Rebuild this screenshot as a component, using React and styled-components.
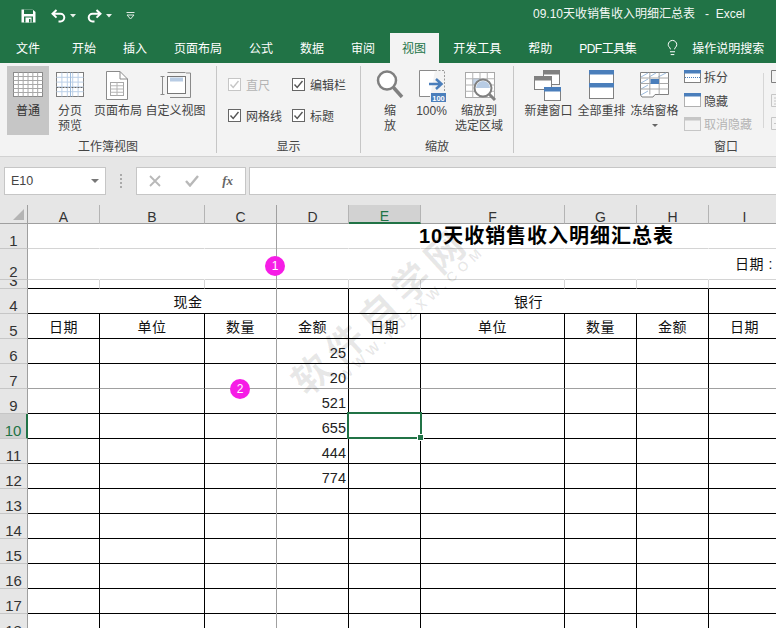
import React from 'react';
import styled, { createGlobalStyle } from 'styled-components';
import { Lightbulb } from 'lucide-react';

const FONT = '"Liberation Sans", "Noto Sans CJK SC", sans-serif';
const GREEN = '#217346';
const BLUE = '#4a7ebb';

const Global = createGlobalStyle`
  html, body { margin: 0; padding: 0; background: #e6e6e6; }
  body { font-family: ${FONT}; }
`;

const Page = styled.div`
  width: 776px; height: 628px; overflow: hidden; display: flex; flex-direction: column;
  font-family: ${FONT}; font-size: 12px; color: #444;
`;
const TitleBar = styled.div`
  height: 33px; flex: none; background: ${GREEN}; color: #fff; display: flex; align-items: flex-start; justify-content: space-between;
  padding: 7px 31px 0 21px; box-sizing: border-box;
`;
const Qat = styled.div`display: flex; align-items: center; height: 17px;`;
const QatSlot = styled.span`display: flex; align-items: center; margin-right: ${p => p.$mr || 0}px;`;
const DocTitle = styled.div`line-height: 14px; white-space: pre; color: #fff; opacity: .95;`;
const TabBar = styled.div`
  height: 30px; flex: none; background: ${GREEN}; display: flex; align-items: stretch; padding-left: 2.5px;
`;
const Tab = styled.div`
  padding: 0 ${p => p.$active ? 12.5 : 13.5}px 2px; display: flex; align-items: center; color: ${p => p.$active ? GREEN : '#fff'}; white-space: nowrap;
  background: ${p => p.$active ? '#f3f3f3' : 'transparent'};
  margin: 0 ${p => p.$active ? 1 : (p.$mr || 0)}px 0 ${p => p.$active ? 1 : 0}px;
  letter-spacing: ${p => p.$tight ? -.5 : 0}px; box-sizing: border-box;
`;
const Search = styled.div`
  display: flex; align-items: center; color: #fff; gap: 11.5px; margin-left: 14px; padding-bottom: 1px; white-space: nowrap;
`;
const Ribbon = styled.div`
  height: 94px; flex: none; background: #f3f3f3; border-bottom: 1px solid #d2d2d2; box-sizing: border-box; padding: 3px 0 3px; display: flex; overflow: hidden;
`;
const Group = styled.section`
  width: ${p => p.$w}px; flex: none; box-sizing: border-box; border-right: ${p => p.$open ? 'none' : '1px solid #c6c6c6'};
  display: flex; flex-direction: column;
`;
const GroupBody = styled.div`flex: 1; display: flex; padding-left: ${p => p.$pl || 0}px; min-height: 0;`;
const GroupLabel = styled.div`height: 16px; line-height: 20px; text-align: center; color: #444; flex: none;`;
const LargeBtn = styled.div`
  width: ${p => p.$w}px; height: 69px; flex: none; display: flex; flex-direction: column; align-items: center;
  background: ${p => p.$active ? '#c6c6c6' : 'transparent'}; color: #444;
`;
const BtnIcon = styled.svg`width: ${p => p.$w}px; height: 38px; flex: none; display: block;`;
const BtnText = styled.div`line-height: 15px; text-align: center; white-space: nowrap; color: ${p => p.$dark ? '#333' : '#444'};`;
const Caret = styled.div`
  width: 0; height: 0; border-left: 3px solid transparent; border-right: 3px solid transparent; border-top: 3px solid #666; margin-top: 5px;
`;
const CheckGrid = styled.div`
  display: grid; grid-template-columns: 64px auto; grid-auto-rows: 31px; padding: 3px 0 0 11px; align-items: center; justify-content: start; margin-top: 0; height: 62px;
`;
const CheckItem = styled.label`display: flex; align-items: center; gap: 5px; color: ${p => p.$off ? '#b4b4b4' : '#444'}; white-space: nowrap;`;
const CheckBox = styled.span`
  width: 13px; height: 13px; box-sizing: border-box; border: 1px solid ${p => p.$off ? '#c6c6c6' : '#666'}; background: #fff; display: flex; align-items: center; justify-content: center;
`;
const SmallCol = styled.div`display: flex; flex-direction: column; margin: -1px 0 0 ${p => p.$ml}px; flex: none; width: ${p => p.$w}px;`;
const SmallRow = styled.div`height: 23.5px; display: flex; align-items: center; gap: 3px; color: ${p => p.$off ? '#b4b4b4' : '#444'}; white-space: nowrap;`;
const InnerSep = styled.div`width: 1px; height: 55px; margin: 7px 0 0 8px; background: #d6d6d6; flex: none;`;

const FormulaBar = styled.div`
  height: 48px; flex: none; background: #e6e6e6; display: flex; align-items: flex-start; padding: 10px 0 0 4px; box-sizing: border-box;
`;
const FBox = styled.div`
  height: 28px; box-sizing: border-box; background: #fff; border: 1px solid #c6c6c6; display: flex; align-items: center; flex: none;
`;
const NameBox = styled(FBox)`width: 102px; padding: 0 6px; justify-content: space-between; color: #444; font-size: 12.5px;`;
const DropTri = styled.span`width: 0; height: 0; border-left: 4px solid transparent; border-right: 4px solid transparent; border-top: 4px solid #777;`;
const Dots = styled.div`width: 30px; flex: none; height: 28px; display: flex; flex-direction: column; align-items: center; justify-content: center; gap: 2px;`;
const Dot = styled.span`width: 2px; height: 2px; background: #aaa;`;
const FnBox = styled(FBox)`width: 110px; position: relative; justify-content: space-between; padding: 0 12px 0 12px;`;
const Fx = styled.span`font-family: "Liberation Serif", serif; font-style: italic; font-weight: 700; font-size: 13px; color: #666;`;
const Input = styled(FBox)`flex: 1; margin: 0 -4px 0 3px;`;

const Sheet = styled.div`flex: 1; min-height: 0; overflow: hidden; position: relative; background: #fff;`;
const SheetGrid = styled.div`
  display: grid; grid-template-columns: 28px 72px 105px 72px 72px 72px 144px 72px 72px 72px; width: 781px;
`;
const Corner = styled.div`
  height: 19px; background: #e6e6e6; box-sizing: border-box; border-right: 1px solid #9f9f9f; border-bottom: 1px solid #9f9f9f; position: relative; overflow: hidden;
  &::after { content: ''; position: absolute; right: 3px; bottom: 3px; width: 0; height: 0; border-left: 11px solid transparent; border-bottom: 11px solid #b4b4b4; }
`;
const ColHead = styled.div`
  height: 19px; box-sizing: border-box; display: flex; justify-content: center; align-items: flex-end; line-height: 12px; font-size: 14px;
  background: ${p => p.$sel ? '#d2d2d2' : '#e6e6e6'}; color: ${p => p.$sel ? GREEN : '#333'};
  border-right: 1px solid #b4b4b4; border-bottom: ${p => p.$sel ? `2px solid ${GREEN}` : '1px solid #9f9f9f'};
`;
const RowHead = styled.div`
  height: ${p => p.$h}px; box-sizing: border-box; overflow: hidden; display: flex; justify-content: center; align-items: flex-end; line-height: 15px; font-size: 15px; padding-bottom: 0;
  background: ${p => p.$sel ? '#d2d2d2' : '#e6e6e6'}; color: ${p => p.$sel ? GREEN : '#333'};
  border-right: ${p => p.$sel ? `2px solid ${GREEN}` : '1px solid #9f9f9f'}; border-bottom: 1px solid #c6c6c6;
`;
const Cell = styled.div`
  grid-column: span ${p => p.$span || 1}; height: ${p => p.$h}px; box-sizing: border-box; position: relative; display: flex; align-items: center; white-space: nowrap;
  justify-content: ${p => p.$align || 'center'}; padding: ${p => p.$num ? 3 : 0}px ${p => p.$align === 'flex-end' ? 2 : 0}px 0 0;
  border-right: 1px solid ${p => p.$right || 'transparent'}; border-bottom: 1px solid ${p => p.$bottom};
  color: ${p => p.$num ? '#222' : '#111'}; font-size: ${p => p.$num ? 14.5 : 14}px; letter-spacing: ${p => p.$num ? 0 : .5}px;
`;
const BigTitle = styled.span`font-size: 20px; font-weight: 700; color: #000; letter-spacing: .97px; position: absolute; left: -2px; top: 0; line-height: 25px;`;
const DateLabel = styled.span`position: absolute; left: 26px; top: 6px; line-height: 18px;`;
const SelBox = styled.div`
  position: absolute; left: -2px; top: -2px; width: 75px; height: 27px; box-sizing: border-box; border: 2px solid ${GREEN}; z-index: 3;
`;
const Handle = styled.div`
  position: absolute; right: -3px; bottom: -3px; width: 5px; height: 5px; background: ${GREEN}; outline: 1px solid #fff;
`;
const FreezeV = styled.div`position: absolute; left: 276px; top: 0; bottom: 0; width: 1px; background: #a0a0a0; z-index: 2;`;
const Mark = styled.div`
  position: absolute; left: ${p => p.$x}px; top: ${p => p.$y}px; width: 20px; height: 20px; border-radius: 50%; background: #f61de6; color: #fff; z-index: 5;
  display: flex; align-items: center; justify-content: center; font-size: 12px;
`;
const Wm = styled.div`
  position: absolute; left: ${p => p.$x}px; top: ${p => p.$y}px; transform: translate(-50%, -50%) rotate(-42.5deg); white-space: nowrap; z-index: 1; pointer-events: none;
  color: rgba(0,0,0,.09); font-weight: 700; font-size: ${p => p.$size}px; letter-spacing: ${p => p.$ls}px;
`;

const grid = (x, y, w, h, cols, rows, stroke) => {
  const out = [];
  for (let i = 1; i < cols; i++) { const px = x + (w * i) / cols; out.push(<line key={'v' + i} x1={px} x2={px} y1={y} y2={y + h} stroke={stroke} />); }
  for (let i = 1; i < rows; i++) { const py = y + (h * i) / rows; out.push(<line key={'h' + i} x1={x} x2={x + w} y1={py} y2={py} stroke={stroke} />); }
  return out;
};

const SaveIcon = () => (
  <svg width="15" height="15" viewBox="0 0 15 15">
    <path d="M0.5 1.5 H11.5 L14.5 4 V14.5 H0.5 Z" fill="#fff" />
    <rect x="3" y="1.5" width="9" height="4.5" fill={GREEN} />
    <rect x="3" y="8.5" width="9" height="6" fill={GREEN} />
    <rect x="4.5" y="9.5" width="6" height="5" fill="#fff" />
    <rect x="8" y="11" width="1.5" height="3.5" fill={GREEN} />
  </svg>
);
const UndoIcon = ({ flip }) => (
  <svg width="15" height="14" viewBox="0 0 15 14" style={flip ? { transform: 'scaleX(-1)' } : undefined}>
    <path d="M5.5 1 L1.5 4.8 L5.5 8.6 M2 4.8 H9.5 A3.7 3.7 0 0 1 9.5 12.4 H7.5" fill="none" stroke="#fff" strokeWidth="2" />
  </svg>
);
const MiniTri = () => <svg width="6" height="4" viewBox="0 0 6 4"><path d="M0 0 H6 L3 3.5 Z" fill="#e8f0eb" /></svg>;
const Customize = () => (
  <svg width="9" height="8" viewBox="0 0 9 8"><path d="M0.5 0.5 H8.5 M1 3 L4.5 7 L8 3 Z" fill="none" stroke="#dfe9e3" /></svg>
);

const NormalIcon = () => (
  <BtnIcon $w={42} viewBox="0 0 42 38">
    <rect x="6.5" y="6.5" width="29" height="24" fill="#fff" stroke="#8a8a8a" />
    {grid(6.5, 6.5, 29, 24, 6, 6, '#a8a8a8')}
  </BtnIcon>
);
const BreakIcon = () => (
  <BtnIcon $w={42} viewBox="0 0 42 38">
    <rect x="7.5" y="6.5" width="27" height="24" fill="#fff" stroke="#7d7d7d" />
    {grid(7.5, 6.5, 27, 24, 5, 5, '#bcd0e8')}
    <line x1="7.5" x2="34.5" y1="21.5" y2="21.5" stroke="#666" strokeDasharray="2 1" />
    <line x1="21.5" x2="21.5" y1="6.5" y2="30.5" stroke="#9dbbdc" />
  </BtnIcon>
);
const PageIcon = () => (
  <BtnIcon $w={54} viewBox="0 0 54 38">
    <path d="M15.5 5.5 H29 L36.5 13 V33.5 H15.5 Z" fill="#fff" stroke="#8a8a8a" />
    <path d="M29 5.5 V13 H36.5" fill="none" stroke="#8a8a8a" />
    <rect x="19.5" y="16.5" width="13" height="13" fill="#fff" stroke="#a8a8a8" />
    {grid(19.5, 16.5, 13, 13, 2, 4, '#b4b4b4')}
  </BtnIcon>
);
const CustomIcon = () => (
  <BtnIcon $w={61} viewBox="0 0 61 38">
    <path d="M22.5 6.5 H40.5 M17.5 10 V28 M15.5 10.5 H19.5 M15.5 28.5 H19.5" fill="none" stroke="#8a8a8a" />
    <path d="M41 7 H45.5 V31.5 H25" fill="none" stroke="#8a8a8a" />
    <rect x="22.5" y="10.5" width="18" height="17" fill="#fff" stroke="#777" />
    <rect x="25" y="11.5" width="13" height="4" fill="#b8cce4" />
  </BtnIcon>
);
const LensIcon = () => (
  <BtnIcon $w={36} viewBox="0 0 36 38">
    <circle cx="15" cy="14.5" r="9" fill="#fff" stroke="#808080" strokeWidth="2.5" />
    <line x1="21.5" y1="21.5" x2="30" y2="31" stroke="#808080" strokeWidth="3.5" />
  </BtnIcon>
);
const HundredIcon = () => (
  <BtnIcon $w={47} viewBox="0 0 47 38">
    <path d="M27 4.5 H11.5 V30.5 H22" fill="#fff" stroke="#8a8a8a" />
    <path d="M27 4.5 H36.5 V26" fill="none" stroke="#9a9a9a" strokeDasharray="2 1.5" />
    <path d="M21 18 H33 M28 13 L33.5 18 L28 23" fill="none" stroke={BLUE} strokeWidth="2.5" />
    <rect x="23" y="27" width="15" height="9" fill={BLUE} />
    <text x="30.5" y="34.5" fontSize="7.5" fontWeight="700" fill="#fff" textAnchor="middle" fontFamily="Liberation Sans">100</text>
  </BtnIcon>
);
const ZoomSelIcon = () => (
  <BtnIcon $w={48} viewBox="0 0 48 38">
    <rect x="10.5" y="6.5" width="29" height="25" fill="#fff" stroke="#a8a8a8" />
    <rect x="17" y="12" width="9" height="7" fill="#c6d6ea" />
    {grid(10.5, 6.5, 29, 25, 4, 4, '#b4b4b4')}
    <circle cx="28" cy="22" r="8.5" fill="#fff" stroke="#808080" strokeWidth="2" />
    <path d="M21 22 A7 7 0 0 1 35 22 Z" fill="#b8cce4" />
    <line x1="34" y1="28" x2="40" y2="34" stroke="#808080" strokeWidth="3" />
  </BtnIcon>
);
const NewWinIcon = () => (
  <BtnIcon $w={53} viewBox="0 0 53 38">
    <rect x="21.5" y="4.5" width="16" height="14" fill="#fff" stroke="#808080" />
    <rect x="21" y="4" width="17" height="4.5" fill="#808080" />
    <rect x="12.5" y="10.5" width="17" height="13" fill="#fff" stroke="#808080" />
    <rect x="12" y="10" width="18" height="4.5" fill="#808080" />
    <rect x="22.5" y="21.5" width="16" height="13" fill="#fff" stroke="#808080" />
    <rect x="22" y="21" width="17" height="4.5" fill={BLUE} />
  </BtnIcon>
);
const ArrangeIcon = () => (
  <BtnIcon $w={53} viewBox="0 0 53 38">
    <rect x="14.5" y="4.5" width="24" height="28" fill="#fff" stroke="#808080" />
    <rect x="14" y="4" width="25" height="4.5" fill={BLUE} />
    <rect x="14" y="17" width="25" height="4.5" fill={BLUE} />
  </BtnIcon>
);
const FreezeIcon = () => (
  <BtnIcon $w={53} viewBox="0 0 53 38">
    <path d="M12.5 6.5 H40.5 V28.5 H27 L25 31 H14 L12.5 29 Z" fill="#fff" stroke="#808080" />
    <path d="M13 11 L20 7 M21 11 L28 7 M30 11 L38 7 M13 17 L20 13 M13 23 L20 19 M13 29 L20 25" stroke="#9dbbdc" />
    {grid(12.5, 6.5, 28, 22, 3, 4, '#a8a8a8')}
    <rect x="22.5" y="13" width="8.5" height="5" fill={BLUE} />
  </BtnIcon>
);
const SplitIcon = () => (
  <svg width="17" height="13" viewBox="0 0 17 13">
    <rect x="0.5" y="1.5" width="16" height="11" fill="#fff" stroke="#808080" />
    <rect x="0" y="0" width="17" height="3.5" fill={BLUE} />
    <line x1="1" x2="16" y1="7.5" y2="7.5" stroke={BLUE} strokeDasharray="1 1" />
  </svg>
);
const HideIcon = () => (
  <svg width="17" height="14" viewBox="0 0 17 14">
    <rect x="0.5" y="1.5" width="16" height="12" fill="#fff" stroke="#666" strokeDasharray="1 1" />
    <rect x="0" y="0" width="17" height="3.5" fill={BLUE} />
  </svg>
);
const UnhideIcon = () => (
  <svg width="17" height="14" viewBox="0 0 17 14">
    <rect x="0.5" y="0.5" width="16" height="13" fill="none" stroke="#c6c6c6" />
    <rect x="0" y="0" width="17" height="3.5" fill="#c6c6c6" />
  </svg>
);
const SideIcon = ({ off, kind }) => (
  <svg width="12" height="13" viewBox="0 0 12 13">
    <path d="M0.5 0.5 H7 L11 4 V12.5 H0.5 Z" fill="none" stroke={off ? '#c6c6c6' : '#808080'} />
    {kind === 'lines' && <path d="M3 4 H9 M3 7 H9 M3 10 H9" stroke="#c6c6c6" />}
    {kind === 'plus' && <path d="M6 3 V10 M3 6.5 H9" stroke="#c6c6c6" />}
  </svg>
);
const Tick = ({ off }) => (
  <svg width="11" height="11" viewBox="0 0 11 11"><path d="M1.5 5.5 L4.2 8.5 L9.5 2" fill="none" stroke={off ? '#c6c6c6' : '#555'} strokeWidth="1.4" /></svg>
);
const XMark = () => <svg width="12" height="12" viewBox="0 0 12 12"><path d="M1 1 L11 11 M11 1 L1 11" stroke="#b8b8b8" strokeWidth="1.8" /></svg>;
const VMark = () => <svg width="14" height="12" viewBox="0 0 14 12"><path d="M1 6 L5 10.5 L13 1" fill="none" stroke="#b8b8b8" strokeWidth="2.4" /></svg>;

const TABS = [
  ['文件', 5], ['开始'], ['插入'], ['页面布局'], ['公式'], ['数据'], ['审阅'], ['视图', 0, true], ['开发工具'], ['帮助'], ['PDF工具集', 0, false, true],
];
const COLS = ['A', 'B', 'C', 'D', 'E', 'F', 'G', 'H', 'I'];
const BLACK = '#000';
const LIGHT = '#d4d4d4';
const GRAY = '#a0a0a0';
const HEADS = ['日期', '单位', '数量', '金额', '日期', '单位', '数量', '金额', '日期'];
const NUMS = { 6: '25', 7: '20', 9: '521', 10: '655', 11: '444', 12: '774' };

const SheetRows = () => {
  const out = [];
  const head = (n, h, sel) => <RowHead key={'r' + n} $h={h} $sel={sel}>{n}</RowHead>;
  out.push(head(1, 25));
  COLS.forEach(c => out.push(<Cell key={'1' + c} $h={25} $bottom={LIGHT}>{c === 'F' && <BigTitle>10天收销售收入明细汇总表</BigTitle>}</Cell>));
  out.push(head(2, 31));
  COLS.forEach(c => out.push(<Cell key={'2' + c} $h={31} $bottom={LIGHT}>{c === 'I' && <DateLabel>日期 :</DateLabel>}</Cell>));
  out.push(head(3, 9));
  COLS.forEach(c => out.push(<Cell key={'3' + c} $h={9} $right={LIGHT} $bottom={BLACK} />));
  out.push(head(4, 25));
  out.push(<Cell key="4a" $h={25} $span={4} $right={BLACK} $bottom={BLACK}>现金</Cell>);
  out.push(<Cell key="4b" $h={25} $span={4} $right={BLACK} $bottom={BLACK}>银行</Cell>);
  out.push(<Cell key="4c" $h={25} $right={BLACK} $bottom={BLACK} />);
  out.push(head(5, 25));
  HEADS.forEach((t, i) => out.push(<Cell key={'5' + i} $h={25} $right={BLACK} $bottom={BLACK}>{t}</Cell>));
  [6, 7, 9, 10, 11, 12, 13, 14, 15, 16, 17, 18].forEach(n => {
    out.push(head(n, 25, n === 10));
    COLS.forEach(c => {
      const isNum = c === 'D' && NUMS[n];
      out.push(
        <Cell key={n + c} $h={25} $right={BLACK} $bottom={n === 7 ? GRAY : BLACK} $num={!!isNum} $align={isNum ? 'flex-end' : undefined}>
          {isNum ? NUMS[n] : null}
          {n === 10 && c === 'E' && <SelBox><Handle /></SelBox>}
        </Cell>
      );
    });
  });
  return out;
};

export default function App() {
  return (
    <Page>
      <Global />
      <TitleBar>
        <Qat>
          <QatSlot $mr={15}><SaveIcon /></QatSlot>
          <QatSlot $mr={4}><UndoIcon /></QatSlot>
          <QatSlot $mr={11}><MiniTri /></QatSlot>
          <QatSlot $mr={4}><UndoIcon flip /></QatSlot>
          <QatSlot $mr={14}><MiniTri /></QatSlot>
          <QatSlot><Customize /></QatSlot>
        </Qat>
        <DocTitle>{'09.10天收销售收入明细汇总表   -  Excel'}</DocTitle>
      </TitleBar>
      <TabBar>
        {TABS.map(([t, mr, active, tight]) => <Tab key={t} $mr={mr} $active={active} $tight={tight}>{t}</Tab>)}
        <Search><Lightbulb size={17} strokeWidth={1.4} color="#fff" />操作说明搜索</Search>
      </TabBar>
      <Ribbon>
        <Group $w={217}>
          <GroupBody $pl={7}>
            <LargeBtn $w={42} $active><NormalIcon /><BtnText $dark>普通</BtnText></LargeBtn>
            <LargeBtn $w={42}><BreakIcon /><BtnText>分页</BtnText><BtnText>预览</BtnText></LargeBtn>
            <LargeBtn $w={54}><PageIcon /><BtnText>页面布局</BtnText></LargeBtn>
            <LargeBtn $w={61}><CustomIcon /><BtnText>自定义视图</BtnText></LargeBtn>
          </GroupBody>
          <GroupLabel>工作簿视图</GroupLabel>
        </Group>
        <Group $w={144}>
          <GroupBody>
            <CheckGrid>
              <CheckItem $off><CheckBox $off><Tick off /></CheckBox>直尺</CheckItem>
              <CheckItem><CheckBox><Tick /></CheckBox>编辑栏</CheckItem>
              <CheckItem><CheckBox><Tick /></CheckBox>网格线</CheckItem>
              <CheckItem><CheckBox><Tick /></CheckBox>标题</CheckItem>
            </CheckGrid>
          </GroupBody>
          <GroupLabel>显示</GroupLabel>
        </Group>
        <Group $w={153}>
          <GroupBody $pl={11}>
            <LargeBtn $w={36}><LensIcon /><BtnText>缩</BtnText><BtnText>放</BtnText></LargeBtn>
            <LargeBtn $w={47}><HundredIcon /><BtnText>100%</BtnText></LargeBtn>
            <LargeBtn $w={48}><ZoomSelIcon /><BtnText>缩放到</BtnText><BtnText>选定区域</BtnText></LargeBtn>
          </GroupBody>
          <GroupLabel>缩放</GroupLabel>
        </Group>
        <Group $w={424} $open>
          <GroupBody $pl={8}>
            <LargeBtn $w={53}><NewWinIcon /><BtnText>新建窗口</BtnText></LargeBtn>
            <LargeBtn $w={53}><ArrangeIcon /><BtnText>全部重排</BtnText></LargeBtn>
            <LargeBtn $w={53}><FreezeIcon /><BtnText>冻结窗格</BtnText><Caret /></LargeBtn>
            <SmallCol $ml={3} $w={71}>
              <SmallRow><SplitIcon />拆分</SmallRow>
              <SmallRow><HideIcon />隐藏</SmallRow>
              <SmallRow $off><UnhideIcon />取消隐藏</SmallRow>
            </SmallCol>
            <InnerSep />
            <SmallCol $ml={7} $w={20}>
              <SmallRow><SideIcon /></SmallRow>
              <SmallRow $off><SideIcon off kind="lines" /></SmallRow>
              <SmallRow $off><SideIcon off kind="plus" /></SmallRow>
            </SmallCol>
          </GroupBody>
          <GroupLabel>窗口</GroupLabel>
        </Group>
      </Ribbon>
      <FormulaBar>
        <NameBox>E10<DropTri /></NameBox>
        <Dots><Dot /><Dot /><Dot /><Dot /></Dots>
        <FnBox><XMark /><VMark /><Fx>fx</Fx></FnBox>
        <Input />
      </FormulaBar>
      <Sheet>
        <SheetGrid>
          <Corner />
          {COLS.map(c => <ColHead key={c} $sel={c === 'E'}>{c}</ColHead>)}
          <SheetRows />
        </SheetGrid>
        <FreezeV />
        <Wm $x={379} $y={104} $size={38} $ls={7}>软件自学网</Wm>
        <Wm $x={412} $y={108} $size={14} $ls={5}>WWW.RJZXW.COM</Wm>
        <Mark $x={265} $y={51}>1</Mark>
        <Mark $x={230} $y={174}>2</Mark>
      </Sheet>
    </Page>
  );
}
